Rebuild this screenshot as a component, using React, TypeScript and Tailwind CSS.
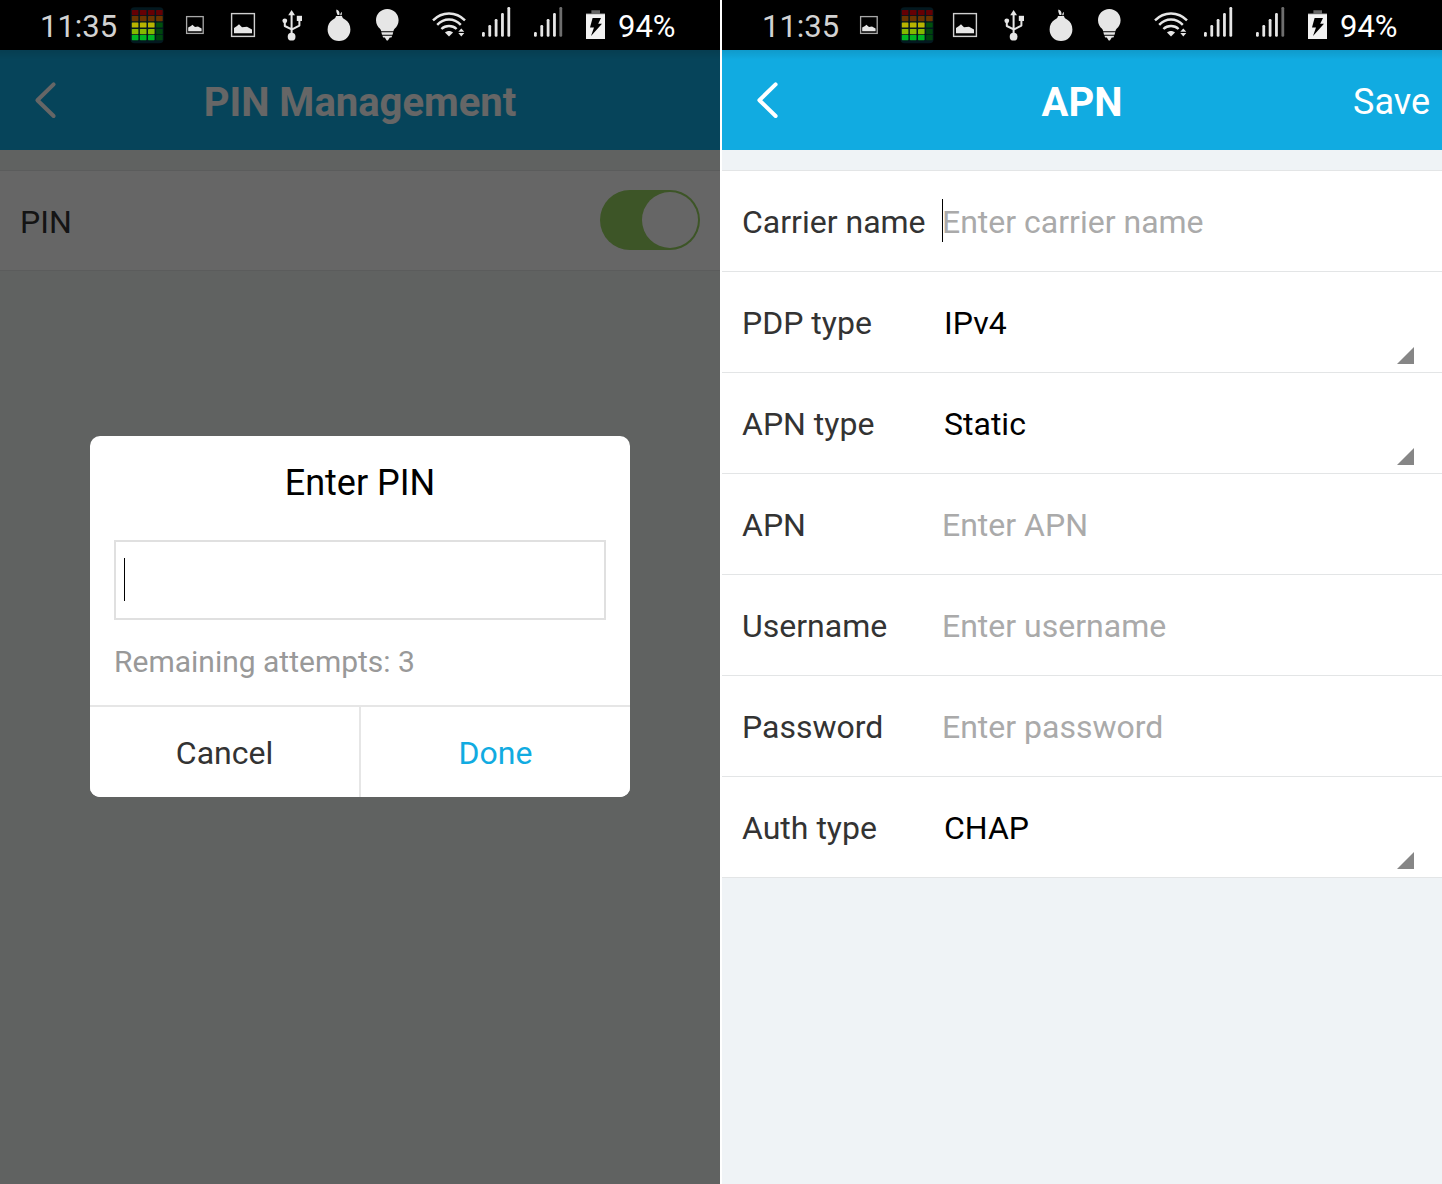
import React from "react";

function EqualizerIcon() {
  const rows = [
    { y: 10, fills: ["#650004", "#650004", "#650004", "#650004"] },
    { y: 16, fills: ["#6b3500", "#6b3500", "#6b3500", "#6b3500"] },
    { y: 22.4, fills: ["#b8b400", "#b8b400", "#b8b400", "#00500c"] },
    { y: 29, fills: ["#84b900", "#84b900", "#84b900", "#00460e"] },
    { y: 35, fills: ["#00b822", "#00b822", "#00b822", "#00460e"] },
  ];
  return (
    <svg viewBox="0 0 48 50" className="h-[50px] w-12 shrink-0" aria-hidden="true">
      <rect x="7.5" y="7.2" width="33" height="36" rx="4" fill="#03181f" />
      {rows.map((r) =>
        r.fills.map((f, i) => (
          <rect key={`${r.y}-${i}`} x={8.8 + i * 8.1} y={r.y} width="6.6" height="5.2" rx="0.6" fill={f} />
        ))
      )}
    </svg>
  );
}

function SmallPictureIcon() {
  return (
    <svg viewBox="0 0 48 50" className="h-[50px] w-12 shrink-0" aria-hidden="true">
      <rect x="15.6" y="16.6" width="16.6" height="16.8" fill="none" stroke="#a8a8a8" strokeWidth="1.3" />
      <path d="M17.2 31.2V27.6L20 26L21.4 24.8L24 27L27 26.4L30.6 28.4V31.2Z" fill="#e6e6e6" />
    </svg>
  );
}

function PictureIcon() {
  return (
    <svg viewBox="0 0 48 50" className="h-[50px] w-12 shrink-0" aria-hidden="true">
      <rect x="12.6" y="13.6" width="22.8" height="22.8" fill="none" stroke="#cfcfcf" strokeWidth="1.4" />
      <path d="M15 33.2V28L18 26L20 24.2L23 27.2L28 26.8L33 29.4V33.2Z" fill="#e6e6e6" />
    </svg>
  );
}

function UsbIcon() {
  return (
    <svg viewBox="0 0 48 50" className="h-[50px] w-12 shrink-0" aria-hidden="true">
      <g fill="#e6e6e6">
        <path d="M24.6 10L28 15.2H21.2Z" />
        <circle cx="24.6" cy="36.7" r="3.9" />
        <circle cx="17.8" cy="20.8" r="2.4" />
        <rect x="29.8" y="15.8" width="5.2" height="5.2" />
      </g>
      <path
        d="M24.6 14V36M17.8 21V26L24.6 29.4M32.4 20V25.6L24.6 29.6"
        fill="none"
        stroke="#e6e6e6"
        strokeWidth="2"
        strokeLinejoin="round"
      />
    </svg>
  );
}

function OnionIcon() {
  return (
    <svg viewBox="0 0 48 50" className="h-[50px] w-12 shrink-0" aria-hidden="true">
      <g fill="#e6e6e6">
        <path d="M21 16H27C27.2 17.6 28 18.4 30 19.6C33.4 21.6 35.4 25 35.4 29.4C35.4 36 30.4 41 24 41C17.6 41 12.6 36 12.6 29.4C12.6 25 14.6 21.6 18 19.6C20 18.4 20.8 17.6 21 16Z" />
        <path d="M21.4 9.6C24 10.4 24.8 12.4 24.4 15H22.6C21.6 13 21 11.6 21.4 9.6Z" />
        <path d="M27 12L26.6 15.2H25.2C25.2 13.8 25.8 12.6 27 12Z" />
      </g>
    </svg>
  );
}

function BulbIcon() {
  return (
    <svg viewBox="0 0 48 50" className="h-[50px] w-12 shrink-0" aria-hidden="true">
      <g fill="#e6e6e6">
        <path d="M24.3 9C30.8 9 35.6 14 35.6 20.2C35.6 24.4 33.6 26.8 31.8 28.6C31 29.4 30.6 30.2 30.4 31.2H18.2C18 30.2 17.6 29.4 16.8 28.6C15 26.8 13 24.4 13 20.2C13 14 17.8 9 24.3 9Z" />
        <path d="M18.4 32.2H30.2L29.6 34.8H19Z" />
        <path d="M19.4 35.8H29.2L28.4 37.6H26.8L24.9 40.4H23.7L21.8 37.6H20.2Z" />
      </g>
    </svg>
  );
}

function WifiIcon() {
  return (
    <svg viewBox="0 0 48 50" className="h-[50px] w-12 shrink-0" aria-hidden="true">
      <g fill="none" stroke="#e6e6e6" strokeWidth="2.4">
        <path d="M8 20.4C17 11.2 31 11.2 40 20.4" />
        <path d="M12.2 24.8C19 17.8 29 17.8 35.8 24.8" />
        <path d="M16.4 29C20.6 25 27.4 25 31.6 29" />
      </g>
      <path d="M20 32.4C22.4 30.4 25.6 30.4 28 32.4L24 36.6Z" fill="#e6e6e6" />
      <path d="M36.3 28.4L39.3 31.8H33.3ZM36.3 36.4L39.3 33H33.3Z" fill="#e6e6e6" />
    </svg>
  );
}

function SignalIcon({ lastFill }: { lastFill: string }) {
  const tops = [32, 25, 19, 13, 7];
  return (
    <svg viewBox="0 0 48 50" className="h-[50px] w-12 shrink-0" aria-hidden="true">
      {tops.map((t, i) => (
        <rect
          key={t}
          x={9 + i * 6.35}
          y={t}
          width="2.8"
          height={36.8 - t}
          rx="1.2"
          fill={i === 4 ? lastFill : "#e6e6e6"}
        />
      ))}
    </svg>
  );
}

function BatteryIcon() {
  return (
    <svg viewBox="0 0 45 50" className="h-[50px] w-[45px] shrink-0" aria-hidden="true">
      <path d="M18.4 10.2H27V13.2H32V17H13V13.2H18.4Z" fill="#666" />
      <rect x="13" y="14.2" width="19" height="24.8" fill="#f2f2f2" />
      <path d="M19.6 18H28L25.2 23.8H29L18 36L21 27.4H17Z" fill="#000" />
    </svg>
  );
}

function StatusBar({ pictureFirst }: { pictureFirst?: boolean }) {
  return (
    <div className="flex h-[50px] items-center bg-black pl-10 text-[31px] leading-[48px]">
      <span className="w-[83px] pt-1 text-[#d2d2d2]">11:35</span>
      {pictureFirst ? (
        <>
          <SmallPictureIcon />
          <EqualizerIcon />
        </>
      ) : (
        <>
          <EqualizerIcon />
          <SmallPictureIcon />
        </>
      )}
      <PictureIcon />
      <UsbIcon />
      <OnionIcon />
      <BulbIcon />
      <div className="ml-3.5 flex items-center">
        <WifiIcon />
        <SignalIcon lastFill="#e6e6e6" />
        <div className="ml-1 flex items-center">
          <SignalIcon lastFill="#6e6e6e" />
          <BatteryIcon />
        </div>
        <span className="pt-1 text-white">94%</span>
      </div>
    </div>
  );
}

function Header({ title, action }: { title: string; action?: string }) {
  return (
    <header className="grid h-[100px] grid-cols-[1fr_auto_1fr] items-center bg-[#11abe1] bg-linear-to-b from-black/10 to-transparent to-10% text-white">
      <button type="button" aria-label="Back" className="ml-[30px] h-[50px] w-[30px]">
        <svg viewBox="0 0 30 50" className="h-[50px] w-[30px]" aria-hidden="true">
          <path
            d="M23.6 9.4L7.4 25.2L23.6 41"
            fill="none"
            stroke="currentColor"
            strokeWidth="4"
            strokeLinecap="round"
            strokeLinejoin="round"
          />
        </svg>
      </button>
      <h1 className="pt-1.5 text-[40px] leading-[48px] font-bold">{title}</h1>
      {action && (
        <button type="button" className="mr-3 justify-self-end pt-1 text-[36px] leading-[48px]">
          {action}
        </button>
      )}
    </header>
  );
}

function Caret() {
  return <span className="pointer-events-none absolute top-0 bottom-px left-0 my-auto h-[43px] w-px bg-black" />;
}

function PinDialog() {
  return (
    <div className="absolute inset-0 flex items-center justify-center bg-black/60 px-[90px] pb-px">
      <form
        role="dialog"
        aria-labelledby="pin-dialog-title"
        className="w-full max-w-[540px] overflow-hidden rounded-[10px] bg-white"
        onSubmit={(e) => e.preventDefault()}
      >
        <div className="px-6 pt-[23px] pb-6">
          <h2 id="pin-dialog-title" className="text-center text-[36px] leading-[48px] text-black">
            Enter PIN
          </h2>
          <div className="mt-[33px] border-2 border-[#e0e0e0] px-2">
            <div className="relative">
              <input
                type="password"
                aria-label="PIN code"
                className="block h-[76px] w-full text-[32px] text-black caret-transparent outline-none"
              />
              <Caret />
            </div>
          </div>
          <p className="mt-[23px] text-[30px] leading-[38px] text-[#999]">Remaining attempts: 3</p>
        </div>
        <div className="grid grid-cols-2 gap-0.5 border-t-2 border-[#e6e6e6] bg-[#e6e6e6] text-[32px]">
          <button type="button" className="h-[90px] bg-white pt-0.5 text-[#333]">
            Cancel
          </button>
          <button type="submit" className="h-[90px] bg-white pt-0.5 text-[#11abe1]">
            Done
          </button>
        </div>
      </form>
    </div>
  );
}

function PinScreen() {
  return (
    <section className="flex flex-col bg-[#eff4f2]">
      <StatusBar />
      <div className="relative grow">
        <Header title="PIN Management" />
        <div className="mt-5 flex h-[101px] items-center justify-between border-y border-[#e3e6e6] bg-white px-5 pb-px">
          <label htmlFor="pin-enabled" className="pt-1 text-[32px] text-[#333]">
            PIN
          </label>
          <input
            id="pin-enabled"
            type="checkbox"
            role="switch"
            defaultChecked
            className="flex h-[60px] w-[100px] appearance-none items-center rounded-full bg-[#ccc] px-0.5 before:size-14 before:rounded-full before:bg-white checked:justify-end checked:bg-[#98d461]"
          />
        </div>
        <PinDialog />
      </div>
    </section>
  );
}

type Field = { id: string; label: string; placeholder?: string; options?: string[]; focused?: boolean };

const fields: Field[] = [
  { id: "carrier", label: "Carrier name", placeholder: "Enter carrier name", focused: true },
  { id: "pdp", label: "PDP type", options: ["IPv4", "IPv6", "IPv4v6"] },
  { id: "apn-type", label: "APN type", options: ["Static", "Dynamic"] },
  { id: "apn", label: "APN", placeholder: "Enter APN" },
  { id: "username", label: "Username", placeholder: "Enter username" },
  { id: "password", label: "Password", placeholder: "Enter password" },
  { id: "auth", label: "Auth type", options: ["CHAP", "PAP", "None"] },
];

function FieldRow({ field }: { field: Field }) {
  return (
    <div className="flex h-[101px] items-center border-b border-[#e3e5e6] pl-5 text-[32px]">
      <label htmlFor={field.id} className="w-[200px] shrink-0 pt-0.5 text-[#333]">
        {field.label}
      </label>
      <div className="relative h-full grow">
        {field.options ? (
          <>
            <select id={field.id} className="h-full w-full appearance-none pt-0.5 pl-0.5 text-black outline-none">
              {field.options.map((o) => (
                <option key={o}>{o}</option>
              ))}
            </select>
            <svg
              viewBox="0 0 17 17"
              className="pointer-events-none absolute right-7 bottom-2 size-[17px]"
              aria-hidden="true"
            >
              <path d="M17 0V17H0Z" fill="#868686" />
            </svg>
          </>
        ) : (
          <input
            id={field.id}
            type={field.id === "password" ? "password" : "text"}
            placeholder={field.placeholder}
            className="h-full w-full pt-0.5 text-black outline-none placeholder:text-[#aaa]"
          />
        )}
        {field.focused && <Caret />}
      </div>
    </div>
  );
}

function ApnScreen() {
  return (
    <section className="flex flex-col bg-[#eff3f6]">
      <StatusBar pictureFirst />
      <Header title="APN" action="Save" />
      <form className="mt-5 border-t border-[#e3e5e6] bg-white" onSubmit={(e) => e.preventDefault()}>
        {fields.map((f) => (
          <FieldRow key={f.id} field={f} />
        ))}
      </form>
    </section>
  );
}

export default function App() {
  return (
    <main className="grid min-h-screen grid-cols-2 gap-0.5 bg-white font-[Roboto,sans-serif]">
      <PinScreen />
      <ApnScreen />
    </main>
  );
}
